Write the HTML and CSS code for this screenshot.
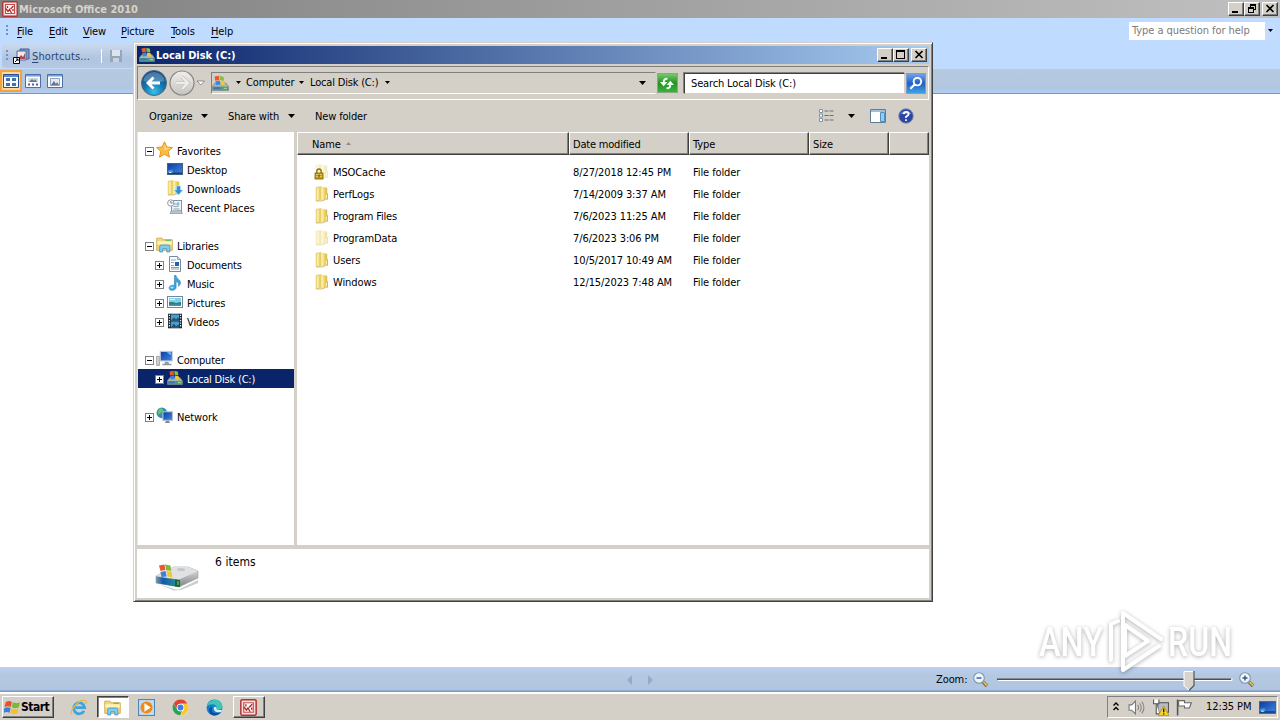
FILE: index.html
```html
<!DOCTYPE html>
<html lang="en">
<head>
<meta charset="utf-8">
<title>Local Disk (C:)</title>
<link rel="stylesheet" href="styles.css">
</head>
<body>
<svg class="defs" width="0" height="0" aria-hidden="true">
  <defs>
    <linearGradient id="g-fold" x1="0" x2="1"><stop offset="0" stop-color="#f7e9a0"/><stop offset=".5" stop-color="#ecd262"/><stop offset="1" stop-color="#d3b43a"/></linearGradient>
    <radialGradient id="g-back" cx=".5" cy=".85" r=".9"><stop offset="0" stop-color="#35c4ee"/><stop offset=".45" stop-color="#1674ae"/><stop offset="1" stop-color="#0d3f76"/></radialGradient>
    <linearGradient id="g-fwd" x1="0" x2="0" y1="0" y2="1"><stop offset="0" stop-color="#efeeeb"/><stop offset="1" stop-color="#c6c4c0"/></linearGradient>
    <linearGradient id="g-screen" x1="0" y1="0" x2="1" y2="1"><stop offset="0" stop-color="#0c3a9c"/><stop offset="1" stop-color="#3f8be8"/></linearGradient>
    <linearGradient id="g-disk" x1="0" y1="0" x2="0" y2="1"><stop offset="0" stop-color="#e6e6e6"/><stop offset="1" stop-color="#7f8487"/></linearGradient>
    <linearGradient id="g-edge" x1="0" y1="0" x2="1" y2="0"><stop offset="0" stop-color="#7d9aa8"/><stop offset=".3" stop-color="#1559a8"/><stop offset=".7" stop-color="#1c7f9c"/><stop offset="1" stop-color="#2f9a5a"/></linearGradient>
  </defs>
  <symbol id="flag" viewBox="0 0 16 16">
    <path d="M1.500 3Q4.500 1 7.400 2.800L6.400 7.500Q3.700 6 .5 7.600Z" fill="#e4532b"/>
    <path d="M8.300 3.100Q11.500 4.700 15 3L14 7.700Q11 9.400 7.300 7.900Z" fill="#7bb83a"/>
    <path d="M.3 8.700Q3.300 7.100 6.200 8.600L5.200 13Q2.500 11.600-.6 13.200Z" fill="#3c7fd6"/>
    <path d="M7.100 9Q10.500 10.500 13.700 8.800L12.700 13.300Q9.600 15 6 13.400Z" fill="#f6c02c"/>
  </symbol>
  <symbol id="disk" viewBox="0 0 16 16">
    <path d="M.5 10.500 3 7.500h10l2.500 3.500v3.500H.5Z" fill="#a9b4ae" stroke="#6f8286" stroke-width=".7"/>
    <path d="M1 11h14v3H1Z" fill="#4f968d"/><path d="M1.500 11.500h6v1.800h-6Z" fill="#3d76b0"/><path d="M11 12h3v1.200h-3Z" fill="#88e17d"/>
    <path d="M2.500 1.500 6.500.7l.5 4-4 .8Z" fill="#e9582e"/><path d="M7.300.8 11 1.800l.3 3.800-3.700-.8Z" fill="#8dbd3b"/>
    <path d="M3.300 6l4-.8.5 3.700-4 .5Z" fill="#3f83da"/><path d="m8 5.500 3.700.7.3 3.500-3.700-.8Z" fill="#f5c833"/>
  </symbol>
  <symbol id="folder" viewBox="0 0 16 16">
    <path d="M2 1.200 7 .4v13.800l-5 .6Z" fill="#ead36b" stroke="#d9bd52" stroke-width=".4"/>
    <path d="M2.700 1.800 4.800 1.500V13.800L2.700 14.100Z" fill="#f7eaa4"/>
    <path d="M7 .6 13.200 1.800v5l.8 1v5.800l-3 .5-4 .9Z" fill="url(#g-fold)"/>
    <path d="M7.600 1.300 9.400 1.600v11.600l-1.800.9Z" fill="#f9ecab"/><path d="M12.300 8.500v4" stroke="#fff6c7"/><path d="M2 14.900 7 15.200l4-1.200" stroke="#bfa75c" fill="none" stroke-width=".6"/>
  </symbol>
  <symbol id="lock" viewBox="0 0 16 16">
    <use href="#folder" opacity=".35"/>
    <path d="M2.800 9V7.200a2.200 2.200 0 0 1 4.400 0V9" fill="none" stroke="#8c7415" stroke-width="1.400"/>
    <rect x="1" y="9" width="8" height="6" fill="#c39b13" stroke="#7f6506" stroke-width=".8"/><path d="M2 10.500h6M2 12.500h6" stroke="#edd15f" stroke-width=".8"/><path d="M5 10.500v2.700" stroke="#56420a"/>
  </symbol>
  <symbol id="star" viewBox="0 0 16 16"><path d="m8 .7 2.200 4.900 5.300.6-4 3.600 1.200 5.400L8 12.400l-4.700 2.800 1.200-5.400-4-3.600 5.300-.6Z" fill="#fbbd3e" stroke="#ea8e22" stroke-width=".9"/><path d="m8 2.500 1.500 4 4 .3-5.500 2Z" fill="#ffe08e"/></symbol>
  <symbol id="desktop" viewBox="0 0 16 16"><rect x=".5" y="2.500" width="15" height="11" fill="url(#g-screen)" stroke="#49607d"/><path d="M1 11.500h14V13H1Z" fill="#123d86"/><path d="m1 9.500 4-1 1.500 3H1Z" fill="#4795d8"/><path d="M2 11.500h2.500" stroke="#d9f4ff"/></symbol>
  <symbol id="downloads" viewBox="0 0 16 16"><use href="#folder" x="-1"/><path d="M9.500 6h4v4H16l-4.500 5L7 10h2.500Z" fill="#2e91df" stroke="#bfe3fb" stroke-width=".6"/></symbol>
  <symbol id="recent" viewBox="0 0 16 16"><rect x="4.500" y="1.500" width="10" height="12" fill="#eff3f6" stroke="#8095a4"/><path d="M6.500 5h6M6.500 7.500h4M6.500 10h6M11 3v5" stroke="#7f9bb4" stroke-width=".9"/><circle cx="3.800" cy="4" r="3.200" fill="#f8f8f8" stroke="#929da4"/><path d="M3.800 2v2h2" stroke="#667" fill="none" stroke-width=".8"/><path d="m4 12 10-.5 1.500 3H3Z" fill="#b7c4cd" stroke="#7c8b95" stroke-width=".6"/></symbol>
  <symbol id="library" viewBox="0 0 16 16"><path d="M.7 2h5l1 1.500h8.600v10H.7Z" fill="#f4d878" stroke="#cba54a" stroke-width=".8"/><path d="M1.300 5h13.500v3H1.300Z" fill="#fff3b9"/><path d="M9 3.500h5v1.200H9Z" fill="#72bb67"/><path d="M3.500 15V9.800Q3.500 8.500 5 8.500h6.500q1.500 0 1.500 1.300V15h-2.800v-3H6.300v3Z" fill="#82cdf2" stroke="#3f93cc" stroke-width=".8"/></symbol>
  <symbol id="document" viewBox="0 0 16 16"><path d="M2.500.5h8l3 3v12h-11Z" fill="#fbfdff" stroke="#73899c"/><path d="M10.500.5v3h3" fill="#c5d5e3" stroke="#73899c" stroke-width=".7"/><path d="M4 4h5M4 6.500h3M4 13h8" stroke="#92a5b4"/><path d="M8 6h4v4H8Z" fill="#2463a8"/><path d="M4 9.500h3M4 11.500h8" stroke="#7fa0bd"/></symbol>
  <symbol id="music" viewBox="0 0 16 16"><path d="M7.500.5h1.600c.2 3.700 5 4 4.300 8-.5 1.500-1.200 2.200-1.900 2.700.7-3-.7-4.100-2.400-4.700v5.800c0 2-1.800 3-3.800 3-2.200 0-3.400-1.200-3.200-2.600.3-1.800 2.700-3 5.400-2.300Z" fill="#39a8e0" stroke="#267bb6" stroke-width=".6"/><ellipse cx="5" cy="12.500" rx="1.600" ry="1" fill="#a6e0fa"/></symbol>
  <symbol id="picture" viewBox="0 0 16 16"><rect x=".5" y="2.500" width="15" height="11" fill="#fff" stroke="#718997"/><path d="M2 4h12v8H2Z" fill="#7fd0ed"/><path d="m2 8 4 0 3 1 5-1v4H2Z" fill="#2d8078"/><path d="M2 10.500h12V12H2Z" fill="#4f8fc0"/><path d="M3 5.500h5" stroke="#e4faff"/></symbol>
  <symbol id="video" viewBox="0 0 16 16"><path d="M1 .7h14v14.600H1Z" fill="#1d2f3c"/><path d="M4 1.500h8v6H4Zm0 7h8v6H4Z" fill="#4b9dcb"/><path d="m4 7.500 3-3 2 2 2-2 1 1v2Zm0 7 3-4 2 3 2-2 1 1v2Z" fill="#224f74"/><path d="M2.500 1.700v13M13.500 1.700v13" stroke="#e9eef1" stroke-width="1.200" stroke-dasharray="1.300 1.300"/></symbol>
  <symbol id="computer" viewBox="0 0 16 16"><path d="M.6 6h2.600v8.500H.6Z" fill="#d3d5d6" stroke="#777" stroke-width=".6"/><rect x="4" y="1.300" width="11.300" height="9" fill="url(#g-screen)" stroke="#c5ccd4" stroke-width="1"/><path d="M10 2h4v3Z" fill="#85bbff"/><path d="M8.500 11h3l1 2h2v1.300H6V13h2Z" fill="#9299a0"/></symbol>
  <symbol id="network" viewBox="0 0 16 16"><circle cx="5.500" cy="5.500" r="5" fill="#2e8fbe"/><path d="M2 3 5 1l2 2-3 3-2 1Zm4 3 3-2 1 3-3 3Z" fill="#69c66b"/><rect x="6.500" y="4.500" width="9" height="8" fill="url(#g-screen)" stroke="#b8c2ce"/><path d="M9.500 13h2.700l1 2H8.300Z" fill="#838a92"/></symbol>
  <symbol id="officepic" viewBox="0 0 16 16"><rect x=".8" y=".8" width="14.400" height="14.400" rx="1" fill="#f9dedd" stroke="#b03233" stroke-width="1.400"/><path d="M3.500 3.500h9v9h-9Z" fill="#fff6f5" stroke="#c4504e" stroke-width="1.100"/><path d="M3.800 7.500 6 10.500 7.500 8.500 9.500 12M5.500 5v2M8.500 8 11.500 5M11 8v2" stroke="#b22b2b" fill="none" stroke-width="1.300"/></symbol>
  <symbol id="mag" viewBox="0 0 16 16"><path d="m10 10 4 4" stroke="#8f712b" stroke-width="3.400"/><path d="m10.500 10 3.500 3.500" stroke="#ecc95a" stroke-width="1.500"/><circle cx="6" cy="6" r="5.300" fill="#eef6fc" stroke="#7c96ad" stroke-width="1.100"/></symbol>
  <symbol id="min" viewBox="0 0 12 10"><path d="M2 7h6v2H2Z"/></symbol>
  <symbol id="max" viewBox="0 0 12 10"><path d="M1 0h9v9H1Zm1 2v6h7V2Z" fill-rule="evenodd"/></symbol>
  <symbol id="restore" viewBox="0 0 12 10"><path d="M4 0h6v6H8v3H2V3h2Zm1 2v1h3v2h1V2ZM3 5v3h4V5Z" fill-rule="evenodd"/></symbol>
  <symbol id="close" viewBox="0 0 12 10"><path d="m2.500 1 7 7m0-7-7 7" stroke="#000" stroke-width="1.700"/></symbol>
</svg>

<header class="app-title">
  <svg class="i16"><use href="#officepic"/></svg><span class="app-name">Microsoft Office 2010</span>
  <span class="wbtns"><i class="wb"><svg><use href="#min"/></svg></i><i class="wb"><svg><use href="#restore"/></svg></i><i class="wb gap"><svg><use href="#close"/></svg></i></span>
</header>
<nav class="menubar">
  <i class="grip"></i>
  <span class="m-file"><u>F</u>ile</span><span class="m-edit"><u>E</u>dit</span><span class="m-view"><u>V</u>iew</span><span class="m-pic"><u>P</u>icture</span><span class="m-tools"><u>T</u>ools</span><span><u>H</u>elp</span>
  <div class="ask"><span>Type a question for help</span><b><svg width="7" height="4"><path d="M1 0h5L3.500 3Z"/></svg></b></div>
</nav>
<div class="toolbar">
  <div class="toolstrip"><i class="grip"></i>
    <svg class="short" viewBox="0 0 17 17"><path d="M7 1h9v10H7Z" fill="#7d99c8" stroke="#43639a"/><path d="M4 3h9v9H4Z" fill="#f4e8e8" stroke="#4e699e"/><path d="m5 11 3-4 2 2 2-4v6Z" fill="#a94955"/><path d="M.5 9.500h6v6h-6Z" fill="#fff" stroke="#000"/><path d="M2 14l3-3M3 11h2v2" stroke="#000" fill="none"/></svg>
    <span class="sc"><u>S</u>hortcuts...</span><i class="vsep"></i>
    <svg class="i14" viewBox="0 0 14 14"><path d="M1 1h12v12H1Z" fill="#98a6b9"/><path d="M3 1h8v6H3Z" fill="#dce4ee"/><path d="M4 9h6v4H4Z" fill="#c7d2e0"/></svg></div>
</div>
<div class="viewbar">
  <i class="vw on"><svg viewBox="0 0 16 14"><path d="M.5.500h15v13H.5Z" fill="#f8fbff" stroke="#24519a"/><path d="M1 1h14v2H1Z" fill="#5b87cc"/><path d="M3 4h4v3H3Zm6 0h4v3H9ZM3 9h4v3H3Zm6 0h4v3H9Z" fill="#476fa9"/></svg></i>
  <i class="vw"><svg viewBox="0 0 16 14"><path d="M.5.500h15v13H.5Z" fill="#f8fbff" stroke="#4b70ae"/><path d="M1 1h14v1.500H1Z" fill="#7b9dd6"/><path d="M3 8V4h10v4Z" fill="#d3d9e3"/><path d="m4 8 3-3 2 2 1-2 2 3Z" fill="#63748f"/><path d="M3 9.500h2v2H3Zm4 0h2v2H7Zm4 0h2v2h-2Z" fill="#53658a"/></svg></i>
  <i class="vw"><svg viewBox="0 0 16 14"><path d="M.5.500h15v13H.5Z" fill="#f8fbff" stroke="#4b70ae"/><path d="M1 1h14v1.500H1Z" fill="#7b9dd6"/><path d="M3.500 4.500h9v7h-9Z" fill="#e6e9ee" stroke="#93a2bb"/><path d="m4 11 3-4 2 3 1-2 2 3Z" fill="#63748f"/></svg></i>
</div>
<main class="workspace"></main>
<footer class="statusbar">
  <svg class="pager" viewBox="0 0 28 12"><path d="M6 1v10L1 6Z" fill="#8ba4c6"/><path d="M22 1v10l5-5Z" fill="#8ba4c6"/></svg>
  <span class="zoomlab">Zoom:</span>
  <svg class="zmag" viewBox="0 0 16 16"><use href="#mag"/><path d="M3.500 6h5" stroke="#3568a8" stroke-width="1.500"/></svg>
  <svg class="slider" viewBox="0 0 236 24"><path d="M1 12.500h234v-2" stroke="#fff" fill="none"/><path d="M0 11.300h234" stroke="#46515e" stroke-width="1.600"/><path d="M187 3.500h10v14l-5 5-5-5Z" fill="#d8d4cc"/><path d="M187 18V3.500h9" stroke="#fff" fill="none"/><path d="M197 3v14.500l-5 5" stroke="#555" fill="none" stroke-width="1.200"/><path d="m187 17.500 5 4.500" stroke="#fff"/></svg>
  <svg class="zmag" viewBox="0 0 16 16"><use href="#mag"/><path d="M3.500 6h5M6 3.500v5" stroke="#35557e" stroke-width="1.400"/></svg>
</footer>
<div class="taskbar">
  <div class="start"><svg class="i17"><use href="#flag"/></svg><b>Start</b></div>
  <div class="quick">
    <i class="tb"><svg class="i17" viewBox="0 0 16 16"><path d="M13.200 11.200a5.200 5.200 0 1 1 .6-3H5" fill="none" stroke="#3ea4df" stroke-width="2.600"/><path d="M1.600 14.400C-.7 11.500 9-1.200 14.600 1.600c1 .7.600 2-.2 3.200" fill="none" stroke="#e9bb3a" stroke-width="1.200"/></svg></i>
    <i class="tb active"><svg class="i17"><use href="#library"/></svg></i>
    <i class="tb"><svg class="i17" viewBox="0 0 16 16"><rect x=".5" y=".5" width="15" height="15" fill="#c3dcef" stroke="#4e86b7"/><circle cx="8" cy="8" r="5.700" fill="#f08a17"/><path d="m6 4 6 4-6 4Z" fill="#fff"/></svg></i>
    <i class="tb"><svg class="i17" viewBox="0 0 16 16"><circle cx="8" cy="8" r="7.500" fill="#fff"/><path d="M1.500 4.200A7.500 7.500 0 0 1 14.600 4.500H8A3.500 3.500 0 0 0 4.900 9.700Z" fill="#e04234"/><path d="M14.600 4.500A7.500 7.500 0 0 1 7.600 15.500L11 9.800A3.500 3.500 0 0 0 8 4.500Z" fill="#fbc828"/><path d="M7.600 15.500A7.500 7.500 0 0 1 1.500 4.200L5 9.800A3.500 3.500 0 0 0 9.500 11.200Z" fill="#2fa251"/><circle cx="8" cy="8" r="3.500" fill="#fff"/><circle cx="8" cy="8" r="2.800" fill="#3d7fe8"/></svg></i>
    <i class="tb"><svg class="i17" viewBox="0 0 16 16"><circle cx="8" cy="8" r="7.500" fill="#1680cf"/><path d="M.7 7C2-.5 14-1.500 15.500 6.500c.3 3-2 4-5.500 3.500C12 5 4 3 .7 7Z" fill="#3fc5b0"/><path d="M6 7.500C3.500 14 10 14.500 14.500 12 10 18 2 15.500 3 9.500c.5-1.500 1.500-2.300 3-2Z" fill="#0b4c9d"/><path d="M7.200 8.200c1-1.700 3.500-1.200 2.800 1.800l6 .5-2 1.800c-4 1-7-1-6.800-4.100Z" fill="#d7f0f0"/></svg></i>
    <i class="tb raised"><svg class="i17"><use href="#officepic"/></svg></i>
  </div>
  <div class="tray">
    <svg class="chev" viewBox="0 0 8 12"><path d="m1.500 4.500 2.500-2.500 2.500 2.500M1.500 9l2.500-2.500 2.500 2.500" stroke="#000" stroke-width="1.400" fill="none"/></svg>
    <svg class="i17 t1" viewBox="0 0 16 16"><path d="M1 5.500h2.500L7 2v12l-3.500-3.500H1Z" fill="#fff" stroke="#777"/><path d="M9 5.500q2 2.500 0 5M11 4q3 4 0 8M13 2.500q4 5.500 0 11" stroke="#888" fill="none"/></svg>
    <svg class="i17 t2" viewBox="0 0 16 16"><rect x="5.500" y="3.500" width="10" height="9" fill="#b6bcc2" stroke="#555"/><path d="M1.500.5v4h5v-4M4 4.500V14h3" fill="#fff" stroke="#555"/><path d="m11 6.500 5 9H6Z" fill="#f9d42c" stroke="#b48b0e" stroke-width=".7"/><path d="M11 9v3.500M11 13.500v1" stroke="#222" stroke-width="1.300"/></svg>
    <svg class="i17 t3" viewBox="0 0 16 16"><path d="M1.500.5v15" stroke="#555" stroke-width="1.500"/><path d="M2.500 1.500h5.500v2h6.500l-2 5H8v-2H2.500Z" fill="#fff" stroke="#666"/></svg>
    <span class="clock">12:35 PM</span>
    <svg class="i17"><use href="#desktop"/></svg>
  </div>
</div>

<svg class="mark" viewBox="0 0 220 80">
  <g class="mark-t"><text x="5" y="53" textLength="64" lengthAdjust="spacingAndGlyphs">ANY</text><text x="134" y="53" textLength="64" lengthAdjust="spacingAndGlyphs">RUN</text></g>
  <path class="mark-p" d="M77 57V21l7-3M89 67V10l38 26M89 67l36-24M91 53V22l23 16-23 15"/>
</svg>

<section class="win">
  <div class="win-title"><svg class="i16"><use href="#disk"/></svg><b>Local Disk (C:)</b><span class="wbtns"><i class="wb"><svg><use href="#min"/></svg></i><i class="wb"><svg><use href="#max"/></svg></i><i class="wb gap"><svg><use href="#close"/></svg></i></span></div>
  <div class="navrow">
    <svg class="orbs" viewBox="0 0 68 28"><circle cx="14" cy="14" r="12.500" fill="url(#g-back)" stroke="#50697f" stroke-width="1"/><path d="M3.500 12a10.500 9 0 0 1 21 0q-10 3-21 0Z" fill="#fff" opacity=".24"/><path d="m13.500 8.500-5.500 5.500 5.500 5.500M9 14h11" fill="none" stroke="#fff" stroke-width="2.800"/><circle cx="42" cy="14" r="12" fill="url(#g-fwd)" stroke="#898784" stroke-width="1.200"/><path d="m42 8 6 6-6 6M47 14H36" fill="none" stroke="#c3c1bd" stroke-width="3.800"/><path d="m42 8 6 6-6 6M47 14H36" fill="none" stroke="#eeedeb" stroke-width="2.400"/><path d="M57 12h7.500l-3.700 4Z" fill="#fff" stroke="#777" stroke-width=".8"/></svg>
    <div class="addr"><svg class="i17"><use href="#disk"/></svg><svg class="dd"><path d="M0 0h5L2.500 3Z"/></svg><span class="a1">Computer</span><svg class="dd"><path d="M0 0h5L2.500 3Z"/></svg><span class="a2">Local Disk (C:)</span><svg class="dd"><path d="M0 0h5L2.500 3Z"/></svg><svg class="dd end"><path d="M0 0h7L3.500 4Z"/></svg></div>
    <div class="refresh"><svg viewBox="0 0 18 18"><path d="M9.500 4Q5.500 3.500 5.500 8v.5M8.500 14q4 .5 4-4V9.500" fill="none" stroke="#eaffea" stroke-width="2.200"/><path d="M1.500 7.500h8l-4 4.500ZM8.500 10.500h8l-4-4.500Z" fill="#eaffea"/></svg></div>
    <div class="search">Search Local Disk (C:)</div>
    <div class="go"><svg viewBox="0 0 18 18"><circle cx="10.500" cy="7" r="4" fill="none" stroke="#fff" stroke-width="2"/><path d="M7.500 10 3 14.500" stroke="#fff" stroke-width="2.400"/></svg></div>
  </div>
  <div class="cmds"><span class="c1">Organize</span><svg class="dd"><path d="M0 0h7L3.500 4Z"/></svg><span class="c2">Share with</span><svg class="dd"><path d="M0 0h7L3.500 4Z"/></svg><span class="c3">New folder</span>
    <svg class="vlist" viewBox="0 0 16 14"><path d="M.5.500h3v3h-3Zm0 4.500h3v3h-3Zm0 4.500h3v3h-3Z" fill="#fff" stroke="#8492a6"/><path d="M5.500 2h10M5.500 6.500h10M5.500 11h10" stroke="#666f7d" stroke-dasharray="4 1"/></svg>
    <svg class="dd vdd"><path d="M0 0h7L3.500 4Z"/></svg>
    <svg class="pane" viewBox="0 0 16 14"><path d="M.5.500h15v13H.5Z" fill="#fff" stroke="#5c7d9b"/><path d="M1 1h14v2H1Z" fill="#9fbfda"/><path d="M10.500 3.500h4v9h-4Z" fill="#8fd0ee" stroke="#4f8fc0"/></svg>
    <svg class="help" viewBox="0 0 16 16"><circle cx="8" cy="8" r="7.300" fill="#2b46a5" stroke="#8793b4"/><path d="M2.500 6a6 5 0 0 1 11 0Z" fill="#6f8bd4"/><path d="M5.600 6.200Q6 3.800 8.300 3.800T10.700 6Q10.500 7.300 8 8.800V10M8 11.300v1.700" stroke="#fff" stroke-width="1.700" fill="none"/></svg>
  </div>
  <div class="mid">
    <aside class="tree">
      <div class="r"><i class="ex"></i><svg class="i17"><use href="#star"/></svg><span>Favorites</span></div>
      <div class="r sub"><i class="ex no"></i><svg class="i16"><use href="#desktop"/></svg><span>Desktop</span></div>
      <div class="r sub"><i class="ex no"></i><svg class="i16"><use href="#downloads"/></svg><span>Downloads</span></div>
      <div class="r sub"><i class="ex no"></i><svg class="i16"><use href="#recent"/></svg><span>Recent Places</span></div>
      <div class="r"></div>
      <div class="r"><i class="ex"></i><svg class="i17"><use href="#library"/></svg><span>Libraries</span></div>
      <div class="r sub"><i class="ex plus"></i><svg class="i16"><use href="#document"/></svg><span class="tight">Documents</span></div>
      <div class="r sub"><i class="ex plus"></i><svg class="i16"><use href="#music"/></svg><span class="tight">Music</span></div>
      <div class="r sub"><i class="ex plus"></i><svg class="i16"><use href="#picture"/></svg><span>Pictures</span></div>
      <div class="r sub"><i class="ex plus"></i><svg class="i16"><use href="#video"/></svg><span>Videos</span></div>
      <div class="r"></div>
      <div class="r"><i class="ex"></i><svg class="i17"><use href="#computer"/></svg><span class="tight">Computer</span></div>
      <div class="r sub sel"><i class="ex plus"></i><svg class="i16"><use href="#disk"/></svg><span class="tight">Local Disk (C:)</span></div>
      <div class="r"></div>
      <div class="r"><i class="ex plus"></i><svg class="i17"><use href="#network"/></svg><span>Network</span></div>
    </aside>
    <div class="list">
      <div class="hd"><div class="h-name">Name<svg width="5" height="3"><path d="M0 3 2.500 0 5 3Z" fill="#8f8c86"/></svg></div><div class="tight">Date modified</div><div>Type</div><div>Size</div><div></div></div>
      <div class="rows">
        <div class="f"><svg class="i16"><use href="#lock"/></svg><span class="n">MSOCache</span><span>8/27/2018 12:45 PM</span><span>File folder</span></div>
        <div class="f"><svg class="i16"><use href="#folder"/></svg><span class="n">PerfLogs</span><span>7/14/2009 3:37 AM</span><span>File folder</span></div>
        <div class="f"><svg class="i16"><use href="#folder"/></svg><span class="n tight">Program Files</span><span>7/6/2023 11:25 AM</span><span>File folder</span></div>
        <div class="f"><svg class="i16 faded"><use href="#folder"/></svg><span class="n">ProgramData</span><span>7/6/2023 3:06 PM</span><span>File folder</span></div>
        <div class="f"><svg class="i16"><use href="#folder"/></svg><span class="n">Users</span><span>10/5/2017 10:49 AM</span><span>File folder</span></div>
        <div class="f"><svg class="i16"><use href="#folder"/></svg><span class="n">Windows</span><span>12/15/2023 7:48 AM</span><span>File folder</span></div>
      </div>
    </div>
  </div>
  <div class="details">
    <svg class="bigdisk" viewBox="0 0 46 30"><path d="m4 23 18 5.500q3 .5 6-1.500l16-8v3L27 29l-7 .5Z" fill="#999" opacity=".5"/><path d="M2 15 20 6h14L44 10v7L25 26 2 22Z" fill="url(#g-disk)" stroke="#999fa0" stroke-width=".6"/><path d="M2 15 20 6h14l10 4-19 8.500Z" fill="#dfe1e2"/><path d="M2 15.500 25 19v7L2 22Z" fill="url(#g-edge)"/><path d="m21 18.500 5 .5v7l-5-.7Z" fill="#245b39"/><path d="M24 20v4" stroke="#4dc85a" stroke-width="1.400"/><ellipse cx="27" cy="8.500" rx="4" ry="1.500" fill="#c4c7c8"/><path d="m5 4.500 5.500-1 1 5.500-5 1Z" fill="#e35b2d"/><path d="m11 3.500 5.500 1 .7 5.500-5-1Z" fill="#83b73b"/><path d="m6.500 11 5-1 1 5.500-5 .5Z" fill="#3e81d3"/><path d="m12.500 10 5 1 1 5.500-5-1Z" fill="#f3c637"/></svg>
    <span>6 items</span>
  </div>
</section>
</body>
</html>
```
FILE: styles.css
```css
* { box-sizing: border-box; }
body { margin: 0; width: 1280px; height: 720px; overflow: hidden; display: flex; flex-direction: column; background: #fff; color: #000; font: 11px/14px "DejaVu Sans Condensed", "DejaVu Sans", sans-serif; font-stretch: condensed; letter-spacing: -0.1px; white-space: nowrap; }
i { font-style: normal; }
svg { flex: none; display: block; }
u { text-underline-offset: 2px; text-decoration-thickness: 1px; }
.defs { position: absolute; }
.i16 { width: 16px; height: 16px; }
.i17 { width: 17px; height: 17px; }
.i14 { width: 14px; height: 14px; }
.tight { letter-spacing: -.2px; }

.app-title { height: 18px; flex: none; display: flex; align-items: center; padding: 0 2px; background: linear-gradient(90deg, #808080, #c0c0c0); }
.app-name { color: #d6d3cc; font-weight: bold; margin-left: 1px; padding-top: 1px; letter-spacing: 0; }
.wbtns { margin-left: auto; display: flex; }
.wb { width: 16px; height: 14px; background: #d4d0c8; border: 1px solid; border-color: #fff #404040 #404040 #fff; box-shadow: inset -1px -1px #808080; padding: 1px; }
.wb svg { width: 12px; height: 10px; }
.wb.gap { margin-left: 2px; }

.menubar { height: 25px; flex: none; background: #bfdbff; display: flex; align-items: center; padding: 0 4px 0 6px; }
.menubar > span { padding-top: 2px; }
.grip { width: 2px; height: 12px; background: repeating-linear-gradient(#6f93c6 0 2px, transparent 2px 4px); }
.m-file { margin-left: 9px; width: 32px; }
.m-edit { width: 34px; }
.m-view { width: 38px; }
.m-pic { width: 50px; }
.m-tools { width: 40px; }
.ask { margin-left: auto; width: 147px; height: 18px; background: #fff; display: flex; justify-content: space-between; padding-left: 3px; color: #7b7b7b; line-height: 17px; letter-spacing: -.05px; }
.ask b { width: 11px; background: #c3dcff; display: flex; align-items: center; justify-content: center; }

.toolbar { height: 26px; flex: none; background: #bfdbff; padding: 1px 0 0 2px; }
.toolstrip { width: 190px; height: 24px; display: flex; align-items: center; padding-left: 4px; border-radius: 3px; background: linear-gradient(#c9d9ee, #b1c5e0 60%, #b6c8e2); color: #2a4775; }
.short { width: 17px; height: 17px; margin: 0 2px 0 5px; }
.sc { letter-spacing: .1px; padding-top: 2px; }
.vsep { width: 1px; height: 14px; background: #fff; margin: 0 7px 0 11px; }
.viewbar { height: 25px; flex: none; background: linear-gradient(#b7cade, #b1c6e2 80%, #b3cdf4); border-bottom: 1px solid #7c97ba; display: flex; align-items: center; }
.vw { width: 22px; height: 22px; padding: 4px 3px; }
.vw svg { width: 16px; height: 14px; }
.vw.on { background: #ffd9a0; border: 2px solid #f3a23c; padding: 2px 1px; }
.workspace { flex: 1; }

.statusbar { height: 26px; flex: none; background: linear-gradient(#bad0ee, #b5c8e1 30%, #b1c5e0 88%, #7c9cc8 92%, #7c9cc8 96%, #fff 96%); display: flex; align-items: center; padding: 0 0 1px 626px; }
.pager { width: 28px; height: 12px; margin-right: 282px; opacity: .8; }
.zoomlab { width: 37px; }
.zmag { width: 16px; height: 16px; }
.slider { width: 236px; height: 24px; margin: 0 6px 0 8px; }

.taskbar { height: 27px; flex: none; background: #d4d0c8; border-top: 1px solid #fff; display: flex; align-items: center; padding: 1px 2px 1px; }
.start { width: 52px; height: 22px; display: flex; align-items: center; border: 1px solid; border-color: #fff #404040 #404040 #fff; box-shadow: inset -1px -1px #808080; padding-left: 1px; font-size: 12px; letter-spacing: -.5px; }
.quick { display: flex; margin-left: 9px; gap: 2px; }
.tb { width: 32px; height: 22px; display: flex; align-items: center; justify-content: center; padding-right: 1px; }
.active { background: #fff; border: 1px solid; border-color: #404040 #fff #fff #404040; box-shadow: inset 1px 1px #808080; }
.raised { border: 1px solid; border-color: #fff #404040 #404040 #fff; box-shadow: inset -1px -1px #808080; }
.tray { margin-left: auto; width: 171px; height: 22px; border: 1px solid; border-color: #808080 #fff #fff #808080; display: flex; align-items: center; padding-left: 4px; }
.chev { width: 8px; height: 12px; }
.t1 { margin-left: 8px; }
.t2 { margin-left: 7px; }
.t3 { margin-left: 7px; }
.clock { margin-left: 13px; width: 53px; }

.mark { position: absolute; left: 1034px; top: 603px; width: 220px; height: 80px; filter: drop-shadow(0 1px 2px rgba(0,0,0,.32)); }
.mark-t { font: 500 41px Roboto, sans-serif; fill: #fff; letter-spacing: 0; }
.mark-p { fill: none; stroke: #fff; stroke-width: 4; stroke-linejoin: round; stroke-linecap: round; }

.win { position: absolute; left: 133px; top: 42px; width: 800px; height: 560px; background: #d4d0c8; border: 1px solid; border-color: #d4d0c8 #404040 #404040 #d4d0c8; box-shadow: inset 1px 1px #fff, inset -1px -1px #808080; padding: 3px; display: flex; flex-direction: column; }
.win-title { height: 18px; flex: none; display: flex; align-items: center; padding: 0 2px; background: linear-gradient(90deg, #0a246a, #a6caf0); color: #fff; letter-spacing: -.05px; }
.win-title b { margin-left: 1px; padding-top: 1px; }
.navrow { height: 34px; flex: none; margin-top: 2px; display: flex; align-items: center; padding-left: 2px; border: 1px solid; border-color: #808080 #fff #fff #808080; }
.orbs { width: 68px; height: 28px; }
.addr { width: 445px; height: 22px; margin-left: 3px; border: 1px solid; border-color: #808080 transparent #fff #808080; display: flex; align-items: center; }
.dd { width: 7px; height: 4px; }
.addr .i17 { margin-right: 7px; }
.a1 { margin-left: 3px; width: 53px; }
.a2 { margin-left: 4px; width: 75px; letter-spacing: -.18px; }
.addr .end { margin-left: auto; margin-right: 9px; }
.refresh { width: 21px; height: 20px; margin-left: 1px; background: linear-gradient(#75c96c, #249124 50%, #39b336); border: 1px solid #86a884; padding: 1px 0; }
.refresh svg, .go svg { width: 18px; height: 17px; }
.search { width: 221px; height: 21px; margin-left: 6px; background: #fff; border: 1px solid; border-color: #404040 #d4d0c8 #d4d0c8 #404040; box-shadow: -1px -1px #808080; padding: 3px 6px; letter-spacing: -.15px; }
.go { width: 20px; height: 21px; margin-left: 1px; background: linear-gradient(#6da3ea, #235fc6 50%, #3ca2e6); border: 1px solid #7f9ccb; padding: 1px 0; }
.cmds { height: 32px; flex: none; display: flex; align-items: center; padding-left: 12px; }
.cmds span { padding-top: 2px; }
.c1 { width: 52px; }
.c2 { width: 60px; margin-left: 20px; letter-spacing: -.15px; }
.c3 { margin-left: 20px; width: 52px; letter-spacing: -.15px; }
.vlist { width: 16px; height: 14px; margin-left: 452px; }
.vdd { margin-left: 13px; }
.pane { width: 16px; height: 14px; margin-left: 15px; }
.help { width: 16px; height: 16px; margin-left: 12px; }
.mid { height: 413px; flex: none; display: flex; }
.tree { width: 157px; flex: none; background: #fff; padding-top: 9px; margin-right: 3px; border-left: 1px solid #e8e6e1; }
.r { height: 19px; display: flex; align-items: center; padding-left: 7px; }
.r span { padding-top: 2px; }
.sub { padding-left: 17px; }
.r svg { margin-bottom: 1px; }
.r .i16 { margin-left: 3px; margin-right: 4px; }
.r .i17 { margin-left: 2px; margin-right: 4px; margin-bottom: 2px; }
.ex { width: 9px; height: 9px; flex: none; margin-top: 1px; border: 1px solid #808080; background: linear-gradient(#000, #000) center / 5px 1px no-repeat #fff; }
.ex.plus { background: linear-gradient(#000, #000) center / 5px 1px no-repeat, linear-gradient(#000, #000) center / 1px 5px no-repeat, #fff; }
.ex.no { visibility: hidden; }
.sel { background: #0a246a; color: #fff; }
.list { width: 632px; background: #fff; }
.hd { height: 23px; display: grid; grid-template-columns: 272px 120px 120px 80px 40px; }
.hd div { background: #d4d0c8; border: 1px solid; border-color: #fff #404040 #404040 #fff; box-shadow: inset -1px -1px #808080; padding: 5px 3px 2px; display: flex; }
.hd .h-name { padding-left: 14px; }
.hd svg { margin: 4px 0 0 5px; }
.rows { padding-top: 6px; }
.f { height: 22px; display: grid; grid-template-columns: 16px 243px 120px 100px; align-items: center; padding-left: 17px; }
.f span { padding-top: 2px; }
.f svg { margin-bottom: 1px; }
.n { padding-left: 3px; }
.faded { opacity: .45; }
.details { height: 49px; margin-top: 4px; background: #fff; display: flex; }
.bigdisk { width: 46px; height: 30px; margin: 12px 0 0 17px; }
.details span { margin: 6px 0 0 15px; font-size: 12px; letter-spacing: .05px; }
```
